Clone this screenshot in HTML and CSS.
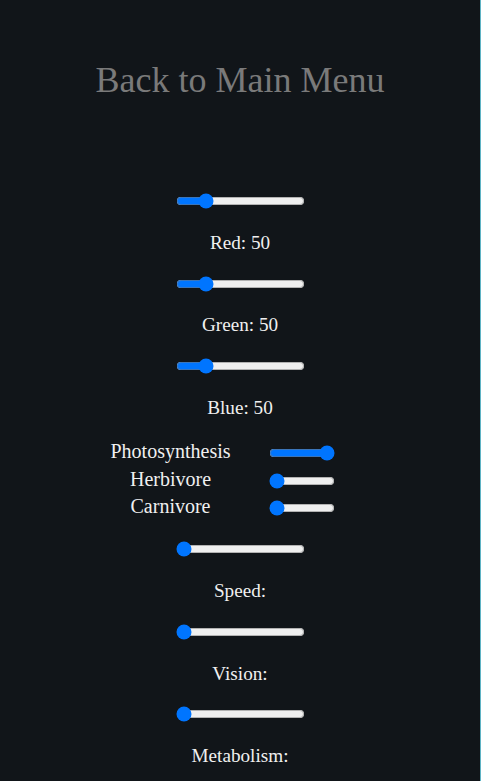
FILE: index.html
```html
<!DOCTYPE html>
<html>
<head>
<meta charset="utf-8">
<link rel="stylesheet" href="styles.css">
</head>
<body>
<div class="page">
  <div class="title">Back to Main Menu</div>
  <div class="controls">
    <div class="group">
      <div class="slider-row"><input type="range" min="0" max="255" value="50"></div>
      <p class="label">Red: 50</p>
    </div>
    <div class="group">
      <div class="slider-row"><input type="range" min="0" max="255" value="50"></div>
      <p class="label">Green: 50</p>
    </div>
    <div class="group">
      <div class="slider-row"><input type="range" min="0" max="255" value="50"></div>
      <p class="label">Blue: 50</p>
    </div>
    <table class="traits">
      <tr><td class="trait-name">Photosynthesis</td><td class="trait-ctl"><input class="small" type="range" min="0" max="100" value="100"></td></tr>
      <tr><td class="trait-name">Herbivore</td><td class="trait-ctl"><input class="small" type="range" min="0" max="100" value="0"></td></tr>
      <tr><td class="trait-name">Carnivore</td><td class="trait-ctl"><input class="small" type="range" min="0" max="100" value="0"></td></tr>
    </table>
    <div class="group">
      <div class="slider-row"><input type="range" min="0" max="100" value="0"></div>
      <p class="label">Speed:</p>
    </div>
    <div class="group">
      <div class="slider-row"><input type="range" min="0" max="100" value="0"></div>
      <p class="label">Vision:</p>
    </div>
    <div class="group">
      <div class="slider-row"><input type="range" min="0" max="100" value="0"></div>
      <p class="label">Metabolism:</p>
    </div>
  </div>
</div>
</body>
</html>
```

FILE: styles.css
```css
html, body {
  margin: 0;
  padding: 0;
  height: 100%;
  overflow: hidden;
}
body {
  background: #111519;
  font-family: "Liberation Serif", "Times New Roman", serif;
  color: #f0f0f0;
  border-right: 1px solid #5fb3c4;
  box-sizing: border-box;
}
.page {
  text-align: center;
}
.title {
  font-size: 36px;
  color: #7a7a7a;
  padding-top: 60px;
  line-height: 41px;
}
.controls {
  padding-top: 89px;
}
.group {
  display: flex;
  flex-direction: column;
  align-items: center;
}
.slider-row {
  font-size: 16px;
  line-height: 20px;
}
.label {
  font-size: 19.2px;
  margin: 20.8px 0 18.2px;
}
.traits {
  margin: 0 auto 17px;
  font-size: 20px;
  border-collapse: separate;
  border-spacing: 2px;
}
.trait-name {
  width: 120px;
  padding: 1px;
  text-align: center;
}
.trait-ctl {
  width: 135px;
  padding: 1px;
  text-align: center;
}
input[type=range] {
  margin: 2px;
  vertical-align: middle;
}
input.small {
  width: 66px;
}
```
